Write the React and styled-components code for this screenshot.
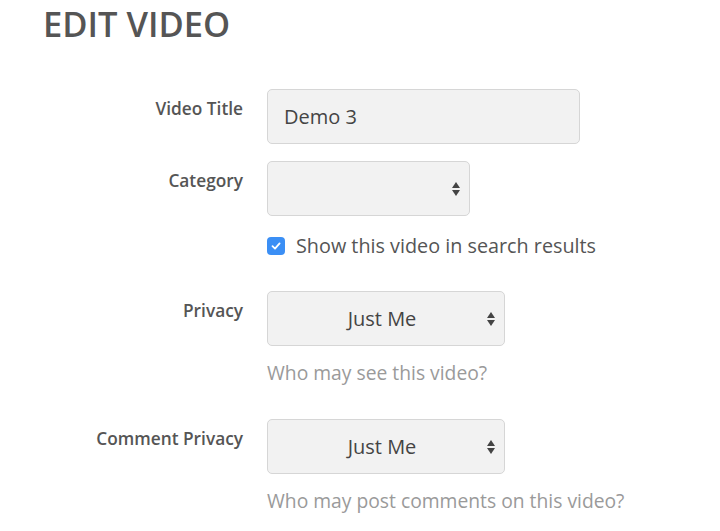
import React from 'react';
import { styled, createGlobalStyle } from 'styled-components';

const Global = createGlobalStyle`
  body {
    margin: 0;
    background: #fff;
    font-family: "Open Sans", Lato, sans-serif;
    color: #555;
  }
`;

const Page = styled.div`
  padding: 6px 0 0 43px;
`;

const Heading = styled.h1`
  margin: 0 0 47px;
  font-size: 34.5px;
  font-weight: 600;
  line-height: 36px;
  color: #555;
`;

const Form = styled.div`
  display: grid;
  grid-template-columns: 200px 1fr;
  column-gap: 24px;
  align-items: start;
`;

const Label = styled.div`
  text-align: right;
  font-size: 17.3px;
  font-weight: 600;
  line-height: 24px;
  color: #555;
  padding-top: 8px;
`;

const Field = styled.div`
  display: flex;
  flex-direction: column;
  align-items: flex-start;
  margin-bottom: ${(p) => p.$gap || 17}px;
`;

const Box = styled.div`
  position: relative;
  box-sizing: border-box;
  width: ${(p) => p.$w}px;
  height: 55px;
  background: #f2f2f2;
  border: 1px solid #d6d6d6;
  border-radius: 5px;
  display: flex;
  align-items: center;
  justify-content: ${(p) => (p.$center ? 'center' : 'flex-start')};
  padding: ${(p) => (p.$center ? '0 8px 0 0' : '0 16px')};
  font-size: 20px;
  color: #444;
`;

const Arrows = styled.svg`
  position: absolute;
  right: 8px;
  top: 50%;
  margin-top: -9px;
`;

const CheckRow = styled.label`
  display: flex;
  align-items: center;
  gap: 11px;
  font-size: 19.8px;
  line-height: 22px;
  font-weight: 500;
  color: #555;
`;

const Check = styled.span`
  width: 18px;
  height: 18px;
  border-radius: 4px;
  background: #3b8ff5;
  display: flex;
  align-items: center;
  justify-content: center;
`;

const Help = styled.div`
  margin-top: 14px;
  font-size: 19.3px;
  line-height: 26px;
  color: #9a9a9a;
`;

function SelectArrows() {
  return (
    <Arrows width="10" height="18" viewBox="0 0 10 18">
      <path d="M5 2 L9 8 L1 8 Z" fill="#444" />
      <path d="M1 10 L9 10 L5 16 Z" fill="#444" />
    </Arrows>
  );
}

export default function App() {
  return (
    <Page>
      <Global />
      <Heading>EDIT VIDEO</Heading>
      <Form>
        <Label>Video Title</Label>
        <Field>
          <Box $w={313}>Demo 3</Box>
        </Field>

        <Label>Category</Label>
        <Field $gap={19}>
          <Box $w={203}>
            <SelectArrows />
          </Box>
        </Field>

        <div />
        <Field $gap={34}>
          <CheckRow>
            <Check>
              <svg width="12" height="12" viewBox="0 0 12 12">
                <path d="M2.5 6.2 L5 8.6 L9.6 3.4" fill="none" stroke="#fff" strokeWidth="1.8" strokeLinecap="round" strokeLinejoin="round" />
              </svg>
            </Check>
            Show this video in search results
          </CheckRow>
        </Field>

        <Label>Privacy</Label>
        <Field $gap={33}>
          <Box $w={238} $center>
            Just Me
            <SelectArrows />
          </Box>
          <Help>Who may see this video?</Help>
        </Field>

        <Label>Comment Privacy</Label>
        <Field>
          <Box $w={238} $center>
            Just Me
            <SelectArrows />
          </Box>
          <Help>Who may post comments on this video?</Help>
        </Field>
      </Form>
    </Page>
  );
}
